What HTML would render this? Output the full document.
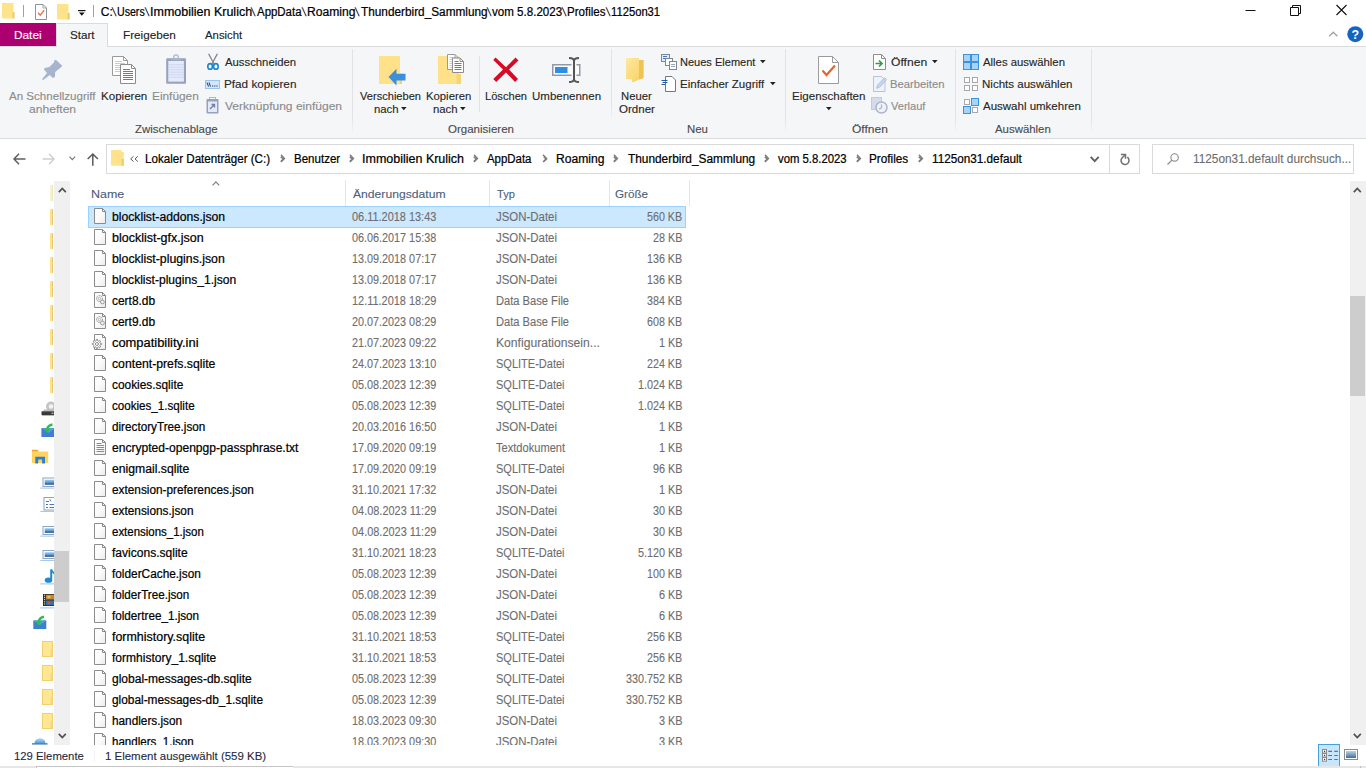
<!DOCTYPE html>
<html lang="de"><head><meta charset="utf-8"><title>1125on31.default</title>
<style>
html,body{margin:0;padding:0;}
body{width:1366px;height:768px;overflow:hidden;background:#fff;position:relative;font-family:'Liberation Sans',sans-serif;font-size:12px;}
.a{position:absolute;}
svg{position:absolute;overflow:visible;}
.t{transform-origin:0 0;position:absolute;white-space:pre;line-height:16px;height:16px;font-family:'Liberation Sans',sans-serif;}
#ribbon{left:0;top:46px;width:1366px;height:93px;background:#f5f6f7;border-top:1px solid #dadbdc;border-bottom:1px solid #dadbdc;box-sizing:border-box;}
#datei{left:0;top:23px;width:56px;height:23px;background:#ad0070;}
#start{left:56px;top:23px;width:52px;height:24px;background:#f5f6f7;border:1px solid #dadbdc;border-bottom:none;box-sizing:border-box;}
.gsep{width:1px;top:49px;height:86px;background:linear-gradient(#e2e3e4,#e2e3e4 80%,rgba(226,227,228,0));}
.ssep{width:1px;background:#e2e3e4;}
#addr{left:106px;top:144px;width:1034px;height:30px;border:1px solid #dadada;box-sizing:border-box;background:#fff;}
#addrsep{left:1109px;top:144px;width:1px;height:30px;background:#dadada;}
#search{left:1152px;top:144px;width:202px;height:30px;border:1px solid #dadada;box-sizing:border-box;background:#fff;}
#navsb{left:54px;top:181px;width:16px;height:564px;background:#f0f0f0;}
#navthumb{left:54px;top:551px;width:15px;height:51px;background:#cdcdcd;}
#mainsb{left:1350px;top:181px;width:16px;height:564px;background:#f0f0f0;}
#mainthumb{left:1350px;top:296px;width:15px;height:100px;background:#cdcdcd;}
.hsep{width:1px;top:180px;height:26px;background:#e5e5e5;}
#sel{left:88px;top:206px;width:598px;height:22px;background:#cce8ff;border:1px solid #99d1ff;box-sizing:border-box;}
#list{left:70px;top:180px;width:1279px;height:565px;overflow:hidden;}
#status{left:0;top:745px;width:1366px;height:21px;background:#fff;}
#bottom{left:0;top:766px;width:1366px;height:2px;background:#e6e6e6;}
#bottombox{left:36px;top:766px;width:257px;height:2px;background:#fff;border-top:1px solid #c4c4c4;border-left:1px solid #c4c4c4;box-sizing:border-box;}
#texts{position:absolute;left:0;top:0;width:1366px;height:745px;overflow:hidden;}
#texts2{position:absolute;left:0;top:0;width:1366px;height:768px;}

</style></head>
<body>
<!-- ============ title bar ============ -->
<svg style="left:2.250px;top:3.200px" width="13" height="16" viewBox="0 0 13 16"><path d="M0 0h11.500v15.500h-11.500z" fill="#ffe38a"/><path d="M11 9h1.500v6.500h-1.500z" fill="#eccb66"/><path d="M10 9.500h1v6h-1z" fill="#f6d878"/></svg>
<div class="a" style="left:23px;top:5px;width:1px;height:12px;background:#a0a0a0"></div>
<svg style="left:35px;top:4px" width="12" height="16" viewBox="0 0 12 16"><path d="M0.500 0.500h7.500l3.500 3.500v11.500h-11z" fill="#fff" stroke="#8d9398" stroke-width="1"/><path d="M8 0.500v3.500h3.500" fill="none" stroke="#8d9398" stroke-width="0.800"/><path d="M3 8.700l2.200 2.400l4-5" fill="none" stroke="#e8704a" stroke-width="1.400"/></svg>
<svg style="left:57px;top:4.200px" width="13" height="16" viewBox="0 0 13 16"><path d="M0 0h11.500v15.500h-11.500z" fill="#ffe38a"/><path d="M11 9h1.700v6.500h-1.700z" fill="#eccb66"/><path d="M10 9.500h1v6h-1z" fill="#f6d878"/></svg>
<svg style="left:78px;top:9px" width="8" height="8" viewBox="0 0 8 8"><path d="M0 1h7.5v1.2h-7.5z" fill="#111"/><path d="M1 3.5h5.6l-2.8 3.3z" fill="#111"/></svg>
<div class="a" style="left:93px;top:5px;width:1px;height:12px;background:#a0a0a0"></div>
<!-- window controls -->
<svg style="left:1244.600px;top:4px" width="104" height="13" viewBox="0 0 104 13">
 <path d="M0.5 6.5h10" stroke="#111" stroke-width="1" fill="none"/>
 <path d="M45.5 3.5h8v8h-8z M47.5 3.5v-2h8v8h-2" stroke="#111" stroke-width="1" fill="none"/>
 <path d="M91.5 1l10 10M101.5 1l-10 10" stroke="#111" stroke-width="1.1" fill="none"/>
</svg>
<!-- ============ tabs ============ -->
<div class="a" id="datei"></div>
<div class="a" id="ribbon"></div>
<div class="a" id="start"></div>
<svg style="left:1327.600px;top:31px" width="11" height="6" viewBox="0 0 11 6"><path d="M1.200 5.200l4.100-3.900l4.100 3.900" fill="none" stroke="#a6a6a6" stroke-width="1.500"/></svg>
<svg style="left:1346.700px;top:26px" width="17" height="17" viewBox="0 0 17 17"><circle cx="8.3" cy="8.2" r="8" fill="#1464c0"/><text x="8.3" y="12.6" text-anchor="middle" font-family="'Liberation Sans',sans-serif" font-weight="700" font-size="12.5" fill="#fff">?</text></svg>
<!-- ============ ribbon separators ============ -->
<div class="a gsep" style="left:352px"></div>
<div class="a gsep" style="left:785px"></div>
<div class="a gsep" style="left:955px"></div>
<div class="a gsep" style="left:1091px"></div>
<div class="a ssep" style="left:479px;top:56px;height:56px"></div>
<div class="a gsep" style="left:611px;height:72px"></div>
<!-- ============ ribbon icons ============ -->
<!-- pin -->
<svg style="left:41px;top:59px" width="22" height="22" viewBox="0 0 22 22"><path d="M13.300 1.200L15.100 1L21.200 6.700L20.300 8L14.200 13L13.900 17.900L11.800 19.100L8.900 15.900L2.200 20.900L1 20.300L6 14.100L3 10.600L3.600 8.900L8.300 8L13 3.600z" fill="#a6b4ce"/></svg>
<!-- copy -->
<svg style="left:112px;top:56px" width="24" height="28" viewBox="0 0 24 28">
 <path d="M0.5 0.5h11l4 4v15h-15z" fill="#fff" stroke="#9a9a9a"/><path d="M11.5 0.5v4h4" fill="none" stroke="#9a9a9a"/>
 <path d="M3 5.5h7M3 7.5h10M3 9.5h10M3 11.5h10M3 13.5h10M3 15.5h10" stroke="#b9cdf0" stroke-width="1"/>
 <path d="M8.5 8.5h11l4 4v15h-15z" fill="#fff" stroke="#8c8c8c"/><path d="M19.5 8.5v4h4" fill="none" stroke="#8c8c8c"/>
 <path d="M11 13.5h7M11 15.5h10M11 17.5h10M11 19.5h10M11 21.5h10M11 23.5h10" stroke="#4a80d8" stroke-width="1"/>
</svg>
<!-- paste (disabled) -->
<svg style="left:166px;top:54px" width="20" height="30" viewBox="0 0 20 30">
 <path d="M7.700 4.500v-1.300a2.300 2.300 0 0 1 4.600 0v1.300" fill="none" stroke="#aeb7cc" stroke-width="1.300"/>
 <rect x="0.200" y="4.200" width="19.800" height="25.600" rx="1" fill="#98a2bc"/>
 <rect x="5" y="4" width="10" height="2.300" fill="#a9b2c8"/>
 <rect x="2.300" y="7" width="15.600" height="20.600" fill="#e5ebfa"/>
 <path d="M2.300 10.700h15.600M2.300 13.200h15.600M2.300 15.700h15.600M2.300 18.200h15.600M2.300 20.700h15.600M2.300 23.200h15.600" stroke="#cad4ef" stroke-width="0.900"/>
</svg>
<!-- scissors -->
<svg style="left:207px;top:53px" width="12" height="17" viewBox="0 0 12 17">
 <path d="M1.600 0.800l5.600 10.500M10.400 0.800l-5.600 10.500" stroke="#858585" stroke-width="1.300" fill="none"/>
 <ellipse cx="3.100" cy="13.400" rx="2.300" ry="2.800" fill="none" stroke="#1b86d0" stroke-width="1.600"/>
 <ellipse cx="8.900" cy="13.400" rx="2.300" ry="2.800" fill="none" stroke="#1b86d0" stroke-width="1.600"/>
</svg>
<!-- path copy -->
<svg style="left:205px;top:80px" width="15" height="9" viewBox="0 0 15 9"><rect x="0.5" y="0.5" width="14" height="8" fill="#d3e6fb" stroke="#9cc3ee"/><path d="M2 2.5l1.5 4M4 2.5l1.5 4" stroke="#1f3a5f" stroke-width="1"/><path d="M7 6h1.2M9.2 6h1.2M11.4 6h1.2" stroke="#1f3a5f" stroke-width="1.2"/></svg>
<!-- paste shortcut (disabled) -->
<svg style="left:206px;top:97px" width="13" height="17" viewBox="0 0 13 17">
 <rect x="3.5" y="0.5" width="6" height="3" fill="none" stroke="#b0b9cc"/>
 <rect x="0.5" y="2" width="12" height="14.5" rx="0.8" fill="#93a2bf"/>
 <rect x="2" y="4.5" width="9" height="10.5" fill="#e3e9f6"/>
 <path d="M4 12l4-4M5.5 7.5h3v3" stroke="#6d7fa5" stroke-width="1.3" fill="none"/>
</svg>
<!-- move to -->
<svg style="left:379px;top:56px" width="28" height="30" viewBox="0 0 28 30">
 <path d="M0 0h21v28h-21z" fill="#ffe18a"/><path d="M21 17.500h2v10.500h-2z" fill="#f2d06c"/>
 <path d="M9.500 21l8-8.300v5h9v6.800h-9v5z" fill="#3b8fdc"/>
</svg>
<!-- copy to -->
<svg style="left:438px;top:54px" width="27" height="31" viewBox="0 0 27 31">
 <path d="M0 2h21v28h-21z" fill="#ffe18a"/><path d="M18.500 20h4.500v10h-4.500z" fill="#f5d576"/>
 <path d="M9.500 0.500h7.500l3.500 3.500v11.500h-11z" fill="#fff" stroke="#9a9a9a"/><path d="M17 0.500v3.500h3.500" fill="none" stroke="#9a9a9a"/>
 <path d="M11.500 3.500h4M11.500 5.500h3M11.500 7.500h3M11.500 9.500h3M11.500 11.500h3M11.500 13.500h3" stroke="#b9cdf0" stroke-width="1"/>
 <path d="M14.500 4h7.500l3.500 3.500v11h-11z" fill="#fff" stroke="#8c8c8c"/><path d="M22 4v3.500h3.500" fill="none" stroke="#8c8c8c"/>
 <path d="M16.500 7.500h4M16.500 9.500h7M16.500 11.500h7M16.500 13.500h7M16.500 15.500h7" stroke="#4a80d8" stroke-width="1"/>
</svg>
<!-- delete -->
<svg style="left:493px;top:57px" width="26" height="26" viewBox="0 0 26 26"><path d="M2.5 0.500L13 10.200L22.500 0.500L25.500 3.500L16 12.600L25 22L22 25L13 15.500L3.200 25L0.300 22L10 12.600L0.300 3z" fill="#d80a25"/></svg>
<!-- rename -->
<svg style="left:552px;top:57px" width="29" height="26" viewBox="0 0 29 26">
 <rect x="0.750" y="7.750" width="27" height="10.500" fill="#fff" stroke="#8e9aa8" stroke-width="1.500"/>
 <rect x="3" y="10" width="12.500" height="6" fill="#2f8ee0"/>
 <rect x="19.500" y="6" width="5" height="14" fill="#f5f6f7"/>
 <path d="M17 1c3 0 5 0.800 5 3v18c0 2.200-2 3-5 3M27 1c-3 0-5 0.800-5 3M27 25c-3 0-5-0.800-5-3" fill="none" stroke="#565656" stroke-width="2"/>
</svg>
<!-- new folder -->
<svg style="left:625px;top:57px" width="20" height="26" viewBox="0 0 20 26">
 <defs><linearGradient id="nf" x1="0" y1="0" x2="1" y2="1"><stop offset="0" stop-color="#ffe9a2"/><stop offset="1" stop-color="#f6cf5e"/></linearGradient></defs>
 <path d="M1 1h13v2h4.500v18l-4.500 1.500l-5 2.500h-2l-0.500-3h-5.500z" fill="url(#nf)"/>
 <path d="M14 3h4.500v18l-4.500 1.500z" fill="#efc453"/>
</svg>
<!-- neues element -->
<svg style="left:661px;top:54px" width="16" height="16" viewBox="0 0 16 16">
 <rect x="0.500" y="0.500" width="8" height="7" fill="#e4eefb" stroke="#7b8794"/><path d="M2 2.500h4M2 4.500h2" stroke="#3b78c9" stroke-width="1"/>
 <rect x="4.500" y="4.500" width="7" height="7" fill="#fff" stroke="#7b8794"/>
 <rect x="8.500" y="7.500" width="7" height="8" fill="#fff" stroke="#7b8794"/><path d="M10 10.500h4M10 12.500h4" stroke="#9aa5b3" stroke-width="1"/>
</svg>
<!-- einfacher zugriff -->
<svg style="left:661px;top:76px" width="15" height="16" viewBox="0 0 15 16">
 <path d="M4.500 0.500h6.500l3.500 3.500v11.500h-10z" fill="#fff" stroke="#6f7a86"/>
 <path d="M0.500 4.500h6M1.500 6.500h5M0.500 8.500h4" stroke="#2a5d9f" stroke-width="1"/>
</svg>
<!-- eigenschaften -->
<svg style="left:818px;top:56px" width="21" height="28" viewBox="0 0 21 28">
 <path d="M0.500 0.500h14l6 6v21h-20z" fill="#fff" stroke="#9b9b9b"/><path d="M14.500 0.500v6h6" fill="none" stroke="#9b9b9b"/>
 <path d="M4.500 14.500l4 4.500l8.500-9.500" fill="none" stroke="#e8642c" stroke-width="2.200"/>
</svg>
<svg style="left:825.500px;top:107px" width="6" height="4" viewBox="0 0 6 4"><path d="M0 0h5.600l-2.800 3.200z" fill="#222"/></svg>
<!-- öffnen -->
<svg style="left:873px;top:54px" width="13" height="16" viewBox="0 0 13 16">
 <path d="M0.500 0.500h8l4 4v11h-12z" fill="#fff" stroke="#8f8f8f"/><path d="M8.500 0.500v4h4" fill="none" stroke="#8f8f8f"/>
 <path d="M2.500 9.500h6M6 6.500l3 3l-3 3" fill="none" stroke="#2ea043" stroke-width="1.700"/>
</svg>
<!-- bearbeiten (disabled) -->
<svg style="left:873px;top:76px" width="14" height="16" viewBox="0 0 14 16">
 <path d="M0.500 0.500h8l3.500 3.500v11.500h-11.500z" fill="#eef2fa" stroke="#b9c2d6"/>
 <path d="M3.500 12.300l1-3l7-7.500l2 2l-7 7.500z" fill="#c9d3ea" stroke="#aab6d4" stroke-width="0.800"/>
</svg>
<!-- verlauf (disabled) -->
<svg style="left:871px;top:97px" width="17" height="17" viewBox="0 0 17 17">
 <rect x="0.500" y="0.500" width="10" height="12" fill="#d5dbe8" stroke="#c2cadb"/>
 <circle cx="10.500" cy="10.500" r="5.500" fill="#eef1f7" stroke="#a9b3c9" stroke-width="1.400"/>
 <path d="M10.500 7.500v3.200l-2.300 1.500" fill="none" stroke="#a9b3c9" stroke-width="1.200"/>
</svg>
<!-- alles auswählen -->
<svg style="left:963px;top:54px" width="17" height="17" viewBox="0 0 17 17">
 <rect x="0.500" y="0.500" width="7" height="7" fill="#a9d3f6" stroke="#3a93df"/><rect x="8.500" y="0.500" width="7" height="7" fill="#a9d3f6" stroke="#3a93df"/>
 <rect x="0.500" y="8.500" width="7" height="7" fill="#a9d3f6" stroke="#3a93df"/><rect x="8.500" y="8.500" width="7" height="7" fill="#a9d3f6" stroke="#3a93df"/>
</svg>
<!-- nichts auswählen -->
<svg style="left:963px;top:76px" width="17" height="17" viewBox="0 0 17 17">
 <rect x="1.500" y="1.500" width="5" height="5" fill="#fff" stroke="#a8a8a8"/><rect x="9.500" y="1.500" width="5" height="5" fill="#fff" stroke="#a8a8a8"/>
 <rect x="1.500" y="9.500" width="5" height="5" fill="#fff" stroke="#a8a8a8"/><rect x="9.500" y="9.500" width="5" height="5" fill="#fff" stroke="#a8a8a8"/>
</svg>
<!-- auswahl umkehren -->
<svg style="left:963px;top:98px" width="17" height="17" viewBox="0 0 17 17">
 <rect x="1.500" y="1.500" width="5" height="5" fill="#fff" stroke="#a8a8a8"/>
 <rect x="8.500" y="0.500" width="7" height="7" fill="#a9d3f6" stroke="#3a93df"/>
 <rect x="0.500" y="8.500" width="7" height="7" fill="#a9d3f6" stroke="#3a93df"/>
 <rect x="9.500" y="9.500" width="5" height="5" fill="#fff" stroke="#a8a8a8"/>
</svg>
<!-- dropdown arrows in ribbon -->
<svg style="left:401.200px;top:107px" width="6" height="4" viewBox="0 0 6 4"><path d="M0 0h5.600l-2.800 3.200z" fill="#222"/></svg>
<svg style="left:460.200px;top:107px" width="6" height="4" viewBox="0 0 6 4"><path d="M0 0h5.600l-2.800 3.200z" fill="#222"/></svg>
<svg style="left:759.500px;top:60px" width="6" height="4" viewBox="0 0 6 4"><path d="M0 0h5.600l-2.800 3.200z" fill="#222"/></svg>
<svg style="left:769.500px;top:82px" width="6" height="4" viewBox="0 0 6 4"><path d="M0 0h5.600l-2.800 3.200z" fill="#222"/></svg>
<svg style="left:932px;top:60px" width="6" height="4" viewBox="0 0 6 4"><path d="M0 0h5.600l-2.800 3.200z" fill="#222"/></svg>
<!-- ============ nav row ============ -->
<svg style="left:13px;top:153px" width="13" height="12" viewBox="0 0 13 12"><path d="M6 0.700l-5 5.300l5 5.300M1 6h11.500" fill="none" stroke="#5f5f5f" stroke-width="1.500"/></svg>
<svg style="left:42px;top:153px" width="13" height="12" viewBox="0 0 13 12"><path d="M7 0.700l5 5.300l-5 5.300M12 6h-11.500" fill="none" stroke="#cfcfcf" stroke-width="1.500"/></svg>
<svg style="left:69px;top:156px" width="7" height="5" viewBox="0 0 7 5"><path d="M0.500 0.700l2.800 2.900l2.800-2.900" fill="none" stroke="#7a7a7a" stroke-width="1.200"/></svg>
<svg style="left:87px;top:153px" width="12" height="13" viewBox="0 0 12 13"><path d="M0.700 6l5.100-5l5.100 5M5.800 1v11.700" fill="none" stroke="#5a5a5a" stroke-width="1.500"/></svg>
<div class="a" id="addr"></div>
<div class="a" id="addrsep"></div>
<div class="a" id="search"></div>
<svg style="left:111px;top:150px" width="13" height="16" viewBox="0 0 13 16"><path d="M0 0h10.500v2h2.300v13.700h-12.800z" fill="#ffe38c"/><path d="M10.500 9h2.300v6.700h-2.300z" fill="#efcf6a"/></svg>
<svg style="left:130px;top:156px" width="9" height="6" viewBox="0 0 9 6"><path d="M3.500 0.300l-2.800 2.600l2.800 2.600M7.800 0.300l-2.800 2.600l2.800 2.600" fill="none" stroke="#555" stroke-width="1"/></svg>
<!-- breadcrumb chevrons -->
<svg style="left:280.1px;top:156.400px" width="5" height="7" viewBox="0 0 5 7"><path d="M0.800 0.700l2.600 2.400l-2.600 2.400" fill="none" stroke="#7e7e7e" stroke-width="1.600"/></svg>
<svg style="left:348.8px;top:156.400px" width="5" height="7" viewBox="0 0 5 7"><path d="M0.800 0.700l2.600 2.400l-2.600 2.400" fill="none" stroke="#7e7e7e" stroke-width="1.600"/></svg>
<svg style="left:473.3px;top:156.400px" width="5" height="7" viewBox="0 0 5 7"><path d="M0.800 0.700l2.600 2.400l-2.600 2.400" fill="none" stroke="#7e7e7e" stroke-width="1.600"/></svg>
<svg style="left:542.5px;top:156.400px" width="5" height="7" viewBox="0 0 5 7"><path d="M0.800 0.700l2.600 2.400l-2.600 2.400" fill="none" stroke="#7e7e7e" stroke-width="1.600"/></svg>
<svg style="left:613.0px;top:156.400px" width="5" height="7" viewBox="0 0 5 7"><path d="M0.800 0.700l2.600 2.400l-2.600 2.400" fill="none" stroke="#7e7e7e" stroke-width="1.600"/></svg>
<svg style="left:763.8px;top:156.400px" width="5" height="7" viewBox="0 0 5 7"><path d="M0.800 0.700l2.600 2.400l-2.600 2.400" fill="none" stroke="#7e7e7e" stroke-width="1.600"/></svg>
<svg style="left:856.3px;top:156.400px" width="5" height="7" viewBox="0 0 5 7"><path d="M0.800 0.700l2.600 2.400l-2.600 2.400" fill="none" stroke="#7e7e7e" stroke-width="1.600"/></svg>
<svg style="left:918.0px;top:156.400px" width="5" height="7" viewBox="0 0 5 7"><path d="M0.800 0.700l2.600 2.400l-2.600 2.400" fill="none" stroke="#7e7e7e" stroke-width="1.600"/></svg>
<svg style="left:279.500px;top:154px" width="6" height="9" viewBox="0 0 6 9"><path d="M1 0.800l3.500 3.600l-3.500 3.600" fill="none" stroke="#7a7a7a" stroke-width="1.300"/></svg>
<svg style="left:348.500px;top:154px" width="6" height="9" viewBox="0 0 6 9"><path d="M1 0.800l3.500 3.600l-3.500 3.600" fill="none" stroke="#7a7a7a" stroke-width="1.300"/></svg>
<svg style="left:473px;top:154px" width="6" height="9" viewBox="0 0 6 9"><path d="M1 0.800l3.500 3.600l-3.500 3.600" fill="none" stroke="#7a7a7a" stroke-width="1.300"/></svg>
<svg style="left:542px;top:154px" width="6" height="9" viewBox="0 0 6 9"><path d="M1 0.800l3.500 3.600l-3.500 3.600" fill="none" stroke="#7a7a7a" stroke-width="1.300"/></svg>
<svg style="left:613px;top:154px" width="6" height="9" viewBox="0 0 6 9"><path d="M1 0.800l3.500 3.600l-3.500 3.600" fill="none" stroke="#7a7a7a" stroke-width="1.300"/></svg>
<svg style="left:763.500px;top:154px" width="6" height="9" viewBox="0 0 6 9"><path d="M1 0.800l3.500 3.600l-3.500 3.600" fill="none" stroke="#7a7a7a" stroke-width="1.300"/></svg>
<svg style="left:856px;top:154px" width="6" height="9" viewBox="0 0 6 9"><path d="M1 0.800l3.500 3.600l-3.500 3.600" fill="none" stroke="#7a7a7a" stroke-width="1.300"/></svg>
<svg style="left:918px;top:154px" width="6" height="9" viewBox="0 0 6 9"><path d="M1 0.800l3.500 3.600l-3.500 3.600" fill="none" stroke="#7a7a7a" stroke-width="1.300"/></svg>
<!-- address dropdown / refresh / search -->
<svg style="left:1090px;top:156px" width="10" height="7" viewBox="0 0 10 7"><path d="M0.700 0.800l4 4.300l4-4.300" fill="none" stroke="#606060" stroke-width="1.900"/></svg>
<svg style="left:1119px;top:153px" width="12" height="13" viewBox="0 0 12 13"><path d="M8.300 4.200A4 4 0 1 1 2.940 4.930L6.300 1.800" fill="none" stroke="#707070" stroke-width="1.500"/><path d="M2 1.500H6.500V5.700" fill="none" stroke="#707070" stroke-width="1.500"/></svg>
<svg style="left:1167px;top:153px" width="12" height="12" viewBox="0 0 12 12"><circle cx="7.600" cy="4.400" r="3.700" fill="none" stroke="#8a8a8a" stroke-width="1.100"/><path d="M4.900 7.100l-4.400 4.400" stroke="#8a8a8a" stroke-width="1.200"/></svg>

<!-- ============ nav pane ============ -->
<div class="a" id="navpane" style="left:0;top:180px;width:54px;height:565px;overflow:hidden">
<div class="a" style="left:50px;top:5px;width:3px;height:16px;background:#f8f1cf;border-right:1px solid #efe6bd;box-sizing:border-box"></div>
<div class="a" style="left:50px;top:29px;width:3px;height:16px;background:#ffe285;border-right:1px solid #e6ca70;box-sizing:border-box"></div>
<div class="a" style="left:50px;top:53px;width:3px;height:16px;background:#ffe285;border-right:1px solid #e6ca70;box-sizing:border-box"></div>
<div class="a" style="left:50px;top:77px;width:3px;height:16px;background:#ffe285;border-right:1px solid #e6ca70;box-sizing:border-box"></div>
<div class="a" style="left:50px;top:101px;width:3px;height:16px;background:#ffe285;border-right:1px solid #e6ca70;box-sizing:border-box"></div>
<div class="a" style="left:50px;top:125px;width:3px;height:16px;background:#ffe285;border-right:1px solid #e6ca70;box-sizing:border-box"></div>
<div class="a" style="left:50px;top:149px;width:3px;height:16px;background:#ffe285;border-right:1px solid #e6ca70;box-sizing:border-box"></div>
<div class="a" style="left:50px;top:173px;width:3px;height:16px;background:#ffe285;border-right:1px solid #e6ca70;box-sizing:border-box"></div>
<div class="a" style="left:50px;top:197px;width:3px;height:16px;background:#ffe285;border-right:1px solid #e6ca70;box-sizing:border-box"></div><!-- drive -->
<svg style="left:41px;top:221px" width="14" height="15" viewBox="0 0 14 15"><circle cx="10" cy="5.500" r="5" fill="#c4c4c4"/><circle cx="10" cy="5.500" r="2.300" fill="#f2f2f2"/><path d="M3 8.500h11v2h-12z" fill="#bdbdbd"/><rect x="0.500" y="10.300" width="14" height="3.700" fill="#3a3a3a"/><rect x="10.500" y="11.700" width="2" height="1" fill="#e6e6e6"/><rect x="1" y="14.300" width="13" height="0.700" fill="#9a9a9a"/></svg>
<!-- blue w/ check -->
<svg style="left:41px;top:244px" width="14" height="13" viewBox="0 0 14 13"><rect x="0.400" y="4" width="14" height="9" fill="#3f7fcf"/><path d="M0.400 4h14l-7 5z" fill="#5d99de"/><path d="M11.500 0.500c-3 0.500-5 2.300-5.600 5" fill="none" stroke="#27c24c" stroke-width="2.400"/><path d="M3 4.700h6l-3 4.300z" fill="#27c24c"/></svg>
<!-- explorer folder -->
<svg style="left:32px;top:269px" width="17" height="15" viewBox="0 0 17 15"><path d="M0 0.800h5.500l1.700 2h-7.200z" fill="#efa62b"/><rect x="0" y="2.600" width="16.200" height="11.400" fill="#ffd35c"/><path d="M3.300 14.500v-6.700h9.700v6.700h-2.900v-3.900h-3.900v3.900z" fill="#2a7fd0"/></svg>
<!-- pictures-like 1 -->
<svg style="left:40px;top:297px" width="15" height="12" viewBox="0 0 15 12"><defs><linearGradient id="pg" x1="0" y1="0" x2="0" y2="1"><stop offset="0" stop-color="#9fd0f5"/><stop offset="0.550" stop-color="#5b9bd8"/><stop offset="1" stop-color="#1d3f6b"/></linearGradient></defs><rect x="3" y="1" width="12" height="8.500" fill="#fff" stroke="#8ea3bd"/><rect x="4.700" y="2.700" width="10" height="5" fill="url(#pg)"/><rect x="0.300" y="10.600" width="15" height="1" fill="#9cc4e8"/></svg>
<!-- documents -->
<svg style="left:40px;top:317px" width="15" height="15" viewBox="0 0 15 15"><rect x="4" y="0.500" width="11" height="12.500" fill="#fff" stroke="#8ea3bd"/><path d="M6 4.500h3M6 7.500h2M9.500 7.500h5M6 10.500h2M9.500 10.500h5" stroke="#3a78c8" stroke-width="1"/><path d="M9.500 2l1.500 2.500" stroke="#3a78c8" stroke-width="0.900"/><rect x="0.300" y="13.900" width="15" height="1" fill="#9cc4e8"/></svg>
<!-- pictures x2 -->
<svg style="left:40px;top:346px" width="15" height="11" viewBox="0 0 15 11"><rect x="3" y="0.500" width="12" height="8" fill="#fff" stroke="#8ea3bd"/><rect x="4.700" y="2.200" width="10" height="4.600" fill="url(#pg)"/><rect x="0.300" y="9.600" width="15" height="1" fill="#9cc4e8"/></svg>
<svg style="left:40px;top:370px" width="15" height="11" viewBox="0 0 15 11"><rect x="3" y="0.500" width="12" height="8" fill="#fff" stroke="#8ea3bd"/><rect x="4.700" y="2.200" width="10" height="4.600" fill="url(#pg)"/><rect x="0.300" y="9.900" width="15" height="1" fill="#9cc4e8"/></svg>
<!-- music -->
<svg style="left:40px;top:389px" width="15" height="16" viewBox="0 0 15 16"><path d="M11.200 0.500v10" stroke="#1e8ad6" stroke-width="2"/><path d="M11.200 0.500c0.800 2.400 2.300 3.400 3.800 4.600" stroke="#1e8ad6" stroke-width="1.800" fill="none"/><ellipse cx="8.500" cy="11.200" rx="3.700" ry="2.600" fill="#1e8ad6"/><rect x="0.300" y="14.400" width="15" height="1" fill="#9cc4e8"/></svg>
<!-- video -->
<svg style="left:40px;top:414px" width="15" height="15" viewBox="0 0 15 15"><rect x="3" y="0" width="12" height="12" fill="#2e2e2e"/><rect x="6" y="0.800" width="9" height="4.700" fill="#c9852f"/><rect x="6" y="6.500" width="9" height="4.700" fill="#3c6fa8"/><rect x="7.500" y="1.800" width="3" height="2.500" fill="#e3c34a"/><rect x="7.500" y="7.500" width="3" height="2.500" fill="#d0523a"/><path d="M4 1.200h1.200M4 3.400h1.200M4 5.600h1.200M4 7.800h1.200M4 10h1.200" stroke="#eaeaea" stroke-width="1"/><rect x="0.300" y="13.400" width="15" height="1" fill="#9cc4e8"/></svg>
<!-- downloads-ish -->
<svg style="left:33px;top:436px" width="14" height="14" viewBox="0 0 14 14"><rect x="0.300" y="4.500" width="13" height="8.500" fill="#3f7fcf"/><path d="M0.300 4.500h13l-6.500 4.500z" fill="#5d99de"/><path d="M11 0.800c-3 0.500-5 2.500-5.600 5.400" fill="none" stroke="#27c24c" stroke-width="2.400"/><path d="M2.500 5.200h6l-3 4.300z" fill="#27c24c"/></svg>
<!-- folders -->
<svg style="left:42px;top:461px" width="11" height="16" viewBox="0 0 11 16"><rect x="0.500" y="0.500" width="10" height="15" fill="#ffe693" stroke="#f0cf6f"/><rect x="8.500" y="8" width="2" height="7.500" fill="#f5d77c"/></svg>
<svg style="left:42px;top:485px" width="11" height="16" viewBox="0 0 11 16"><rect x="0.500" y="0.500" width="10" height="15" fill="#ffe693" stroke="#f0cf6f"/><rect x="8.500" y="8" width="2" height="7.500" fill="#f5d77c"/></svg>
<svg style="left:42px;top:509px" width="11" height="16" viewBox="0 0 11 16"><rect x="0.500" y="0.500" width="10" height="15" fill="#ffe693" stroke="#f0cf6f"/><rect x="8.500" y="8" width="2" height="7.500" fill="#f5d77c"/></svg>
<svg style="left:42px;top:533px" width="11" height="16" viewBox="0 0 11 16"><rect x="0.500" y="0.500" width="10" height="15" fill="#ffe693" stroke="#f0cf6f"/><rect x="8.500" y="8" width="2" height="7.500" fill="#f5d77c"/></svg>
<!-- network -->
<svg style="left:32px;top:557px" width="16" height="9" viewBox="0 0 16 9"><defs><linearGradient id="ng" x1="0" y1="0" x2="0" y2="1"><stop offset="0" stop-color="#c4e3f8"/><stop offset="1" stop-color="#4b94d6"/></linearGradient></defs><path d="M2.500 6.500a5.500 5.500 0 0 1 11 0z" fill="url(#ng)"/><rect x="0" y="6.300" width="15.500" height="1.200" fill="#2a68a8"/></svg>

</div>
<div class="a" id="navsb"></div>
<div class="a" id="navthumb"></div>
<svg style="left:57.500px;top:187px" width="9" height="6" viewBox="0 0 9 6"><path d="M0.800 5.200l3.500-3.700l3.500 3.700" fill="none" stroke="#505050" stroke-width="1.700"/></svg>
<svg style="left:57.500px;top:733px" width="9" height="6" viewBox="0 0 9 6"><path d="M0.800 0.800l3.500 3.700l3.500-3.700" fill="none" stroke="#505050" stroke-width="1.700"/></svg>
<!-- ============ list header ============ -->
<div class="a hsep" style="left:345px"></div>
<div class="a hsep" style="left:489px"></div>
<div class="a hsep" style="left:609px"></div>
<div class="a hsep" style="left:689px"></div>
<svg style="left:212px;top:181px" width="8" height="5" viewBox="0 0 8 5"><path d="M0.600 4.400l3.300-3.500l3.300 3.500" fill="none" stroke="#828282" stroke-width="1.300"/></svg>
<div class="a" id="sel"></div>
<svg width="0" height="0" style="left:0;top:0"><defs><linearGradient id="dg" x1="0" y1="0" x2="1" y2="1"><stop offset="0" stop-color="#ffffff"/><stop offset="0.500" stop-color="#fbfbfb"/><stop offset="1" stop-color="#ebebeb"/></linearGradient></defs></svg>
<svg style="left:94px;top:208px" width="13" height="16" viewBox="0 0 13 16"><path d="M0.500 0.500h8l3 3v12h-11z" fill="url(#dg)" stroke="#8c8c8c"/><path d="M8.500 0.500v3h3" fill="none" stroke="#878787"/></svg>
<svg style="left:94px;top:229px" width="13" height="16" viewBox="0 0 13 16"><path d="M0.500 0.500h8l3 3v12h-11z" fill="url(#dg)" stroke="#8c8c8c"/><path d="M8.500 0.500v3h3" fill="none" stroke="#878787"/></svg>
<svg style="left:94px;top:250px" width="13" height="16" viewBox="0 0 13 16"><path d="M0.500 0.500h8l3 3v12h-11z" fill="url(#dg)" stroke="#8c8c8c"/><path d="M8.500 0.500v3h3" fill="none" stroke="#878787"/></svg>
<svg style="left:94px;top:271px" width="13" height="16" viewBox="0 0 13 16"><path d="M0.500 0.500h8l3 3v12h-11z" fill="url(#dg)" stroke="#8c8c8c"/><path d="M8.500 0.500v3h3" fill="none" stroke="#878787"/></svg>
<svg style="left:94px;top:292px" width="13" height="16" viewBox="0 0 13 16"><path d="M0.500 0.500h8l3 3v12h-11z" fill="url(#dg)" stroke="#8c8c8c"/><path d="M8.500 0.500v3h3" fill="none" stroke="#878787"/><circle cx="5.500" cy="6.500" r="3" fill="#f4f4f4" stroke="#909090" stroke-width="1" stroke-dasharray="1.500 0.700"/><circle cx="5.500" cy="6.500" r="1.200" fill="#fff" stroke="#9a9a9a" stroke-width="0.700"/><circle cx="8.400" cy="10" r="1.900" fill="#f4f4f4" stroke="#909090" stroke-width="0.900"/></svg>
<svg style="left:94px;top:313px" width="13" height="16" viewBox="0 0 13 16"><path d="M0.500 0.500h8l3 3v12h-11z" fill="url(#dg)" stroke="#8c8c8c"/><path d="M8.500 0.500v3h3" fill="none" stroke="#878787"/><circle cx="5.500" cy="6.500" r="3" fill="#f4f4f4" stroke="#909090" stroke-width="1" stroke-dasharray="1.500 0.700"/><circle cx="5.500" cy="6.500" r="1.200" fill="#fff" stroke="#9a9a9a" stroke-width="0.700"/><circle cx="8.400" cy="10" r="1.900" fill="#f4f4f4" stroke="#909090" stroke-width="0.900"/></svg>
<svg style="left:94px;top:334px" width="13" height="16" viewBox="0 0 13 16"><path d="M0.500 0.500h8l3 3v12h-11z" fill="url(#dg)" stroke="#8c8c8c"/><path d="M8.500 0.500v3h3" fill="none" stroke="#878787"/><path d="M6.12 9.28L7.56 9.41L7.56 10.59L6.12 10.72L5.69 11.77L6.61 12.88L5.78 13.71L4.67 12.79L3.62 13.22L3.49 14.66L2.31 14.66L2.18 13.22L1.13 12.79L0.02 13.71L-0.81 12.88L0.11 11.77L-0.32 10.72L-1.76 10.59L-1.76 9.41L-0.32 9.28L0.11 8.23L-0.81 7.12L0.02 6.29L1.13 7.21L2.18 6.78L2.31 5.34L3.49 5.34L3.62 6.78L4.67 7.21L5.78 6.29L6.61 7.12L5.69 8.23z" fill="#fff" stroke="#858585" stroke-width="0.900"/><circle cx="2.900" cy="10" r="1.500" fill="#fff" stroke="#858585" stroke-width="0.900"/></svg>
<svg style="left:94px;top:355px" width="13" height="16" viewBox="0 0 13 16"><path d="M0.500 0.500h8l3 3v12h-11z" fill="url(#dg)" stroke="#8c8c8c"/><path d="M8.500 0.500v3h3" fill="none" stroke="#878787"/></svg>
<svg style="left:94px;top:376px" width="13" height="16" viewBox="0 0 13 16"><path d="M0.500 0.500h8l3 3v12h-11z" fill="url(#dg)" stroke="#8c8c8c"/><path d="M8.500 0.500v3h3" fill="none" stroke="#878787"/></svg>
<svg style="left:94px;top:397px" width="13" height="16" viewBox="0 0 13 16"><path d="M0.500 0.500h8l3 3v12h-11z" fill="url(#dg)" stroke="#8c8c8c"/><path d="M8.500 0.500v3h3" fill="none" stroke="#878787"/></svg>
<svg style="left:94px;top:418px" width="13" height="16" viewBox="0 0 13 16"><path d="M0.500 0.500h8l3 3v12h-11z" fill="url(#dg)" stroke="#8c8c8c"/><path d="M8.500 0.500v3h3" fill="none" stroke="#878787"/></svg>
<svg style="left:94px;top:439px" width="13" height="16" viewBox="0 0 13 16"><path d="M0.500 0.500h8l3 3v12h-11z" fill="url(#dg)" stroke="#8c8c8c"/><path d="M8.500 0.500v3h3" fill="none" stroke="#878787"/><path d="M2.500 4.500h5M2.500 6.500h7.500M2.500 8.500h7.500M2.500 10.500h7.500M2.500 12.500h7.500" stroke="#8a8a8a" stroke-width="1"/></svg>
<svg style="left:94px;top:460px" width="13" height="16" viewBox="0 0 13 16"><path d="M0.500 0.500h8l3 3v12h-11z" fill="url(#dg)" stroke="#8c8c8c"/><path d="M8.500 0.500v3h3" fill="none" stroke="#878787"/></svg>
<svg style="left:94px;top:481px" width="13" height="16" viewBox="0 0 13 16"><path d="M0.500 0.500h8l3 3v12h-11z" fill="url(#dg)" stroke="#8c8c8c"/><path d="M8.500 0.500v3h3" fill="none" stroke="#878787"/></svg>
<svg style="left:94px;top:502px" width="13" height="16" viewBox="0 0 13 16"><path d="M0.500 0.500h8l3 3v12h-11z" fill="url(#dg)" stroke="#8c8c8c"/><path d="M8.500 0.500v3h3" fill="none" stroke="#878787"/></svg>
<svg style="left:94px;top:523px" width="13" height="16" viewBox="0 0 13 16"><path d="M0.500 0.500h8l3 3v12h-11z" fill="url(#dg)" stroke="#8c8c8c"/><path d="M8.500 0.500v3h3" fill="none" stroke="#878787"/></svg>
<svg style="left:94px;top:544px" width="13" height="16" viewBox="0 0 13 16"><path d="M0.500 0.500h8l3 3v12h-11z" fill="url(#dg)" stroke="#8c8c8c"/><path d="M8.500 0.500v3h3" fill="none" stroke="#878787"/></svg>
<svg style="left:94px;top:565px" width="13" height="16" viewBox="0 0 13 16"><path d="M0.500 0.500h8l3 3v12h-11z" fill="url(#dg)" stroke="#8c8c8c"/><path d="M8.500 0.500v3h3" fill="none" stroke="#878787"/></svg>
<svg style="left:94px;top:586px" width="13" height="16" viewBox="0 0 13 16"><path d="M0.500 0.500h8l3 3v12h-11z" fill="url(#dg)" stroke="#8c8c8c"/><path d="M8.500 0.500v3h3" fill="none" stroke="#878787"/></svg>
<svg style="left:94px;top:607px" width="13" height="16" viewBox="0 0 13 16"><path d="M0.500 0.500h8l3 3v12h-11z" fill="url(#dg)" stroke="#8c8c8c"/><path d="M8.500 0.500v3h3" fill="none" stroke="#878787"/></svg>
<svg style="left:94px;top:628px" width="13" height="16" viewBox="0 0 13 16"><path d="M0.500 0.500h8l3 3v12h-11z" fill="url(#dg)" stroke="#8c8c8c"/><path d="M8.500 0.500v3h3" fill="none" stroke="#878787"/></svg>
<svg style="left:94px;top:649px" width="13" height="16" viewBox="0 0 13 16"><path d="M0.500 0.500h8l3 3v12h-11z" fill="url(#dg)" stroke="#8c8c8c"/><path d="M8.500 0.500v3h3" fill="none" stroke="#878787"/></svg>
<svg style="left:94px;top:670px" width="13" height="16" viewBox="0 0 13 16"><path d="M0.500 0.500h8l3 3v12h-11z" fill="url(#dg)" stroke="#8c8c8c"/><path d="M8.500 0.500v3h3" fill="none" stroke="#878787"/></svg>
<svg style="left:94px;top:691px" width="13" height="16" viewBox="0 0 13 16"><path d="M0.500 0.500h8l3 3v12h-11z" fill="url(#dg)" stroke="#8c8c8c"/><path d="M8.500 0.500v3h3" fill="none" stroke="#878787"/></svg>
<svg style="left:94px;top:712px" width="13" height="16" viewBox="0 0 13 16"><path d="M0.500 0.500h8l3 3v12h-11z" fill="url(#dg)" stroke="#8c8c8c"/><path d="M8.500 0.500v3h3" fill="none" stroke="#878787"/></svg>
<svg style="left:94px;top:733px" width="13" height="16" viewBox="0 0 13 16"><path d="M0.500 0.500h8l3 3v12h-11z" fill="url(#dg)" stroke="#8c8c8c"/><path d="M8.500 0.500v3h3" fill="none" stroke="#878787"/></svg>
<!-- ============ main scrollbar ============ -->
<div class="a" id="mainsb"></div>
<div class="a" id="mainthumb"></div>
<svg style="left:1353.300px;top:187px" width="9" height="6" viewBox="0 0 9 6"><path d="M0.800 5.200l3.500-3.700l3.500 3.700" fill="none" stroke="#505050" stroke-width="1.700"/></svg>
<svg style="left:1353.300px;top:733px" width="9" height="6" viewBox="0 0 9 6"><path d="M0.800 0.800l3.500 3.700l3.500-3.700" fill="none" stroke="#505050" stroke-width="1.700"/></svg>

<div id="texts">
<span class="t" style="font-size:12px;color:#000;top:4.00px;left:100.80px;transform:scaleX(1.0000);-webkit-text-stroke:0.22px #000;">C:</span>
<span class="t" style="font-size:12px;color:#000;top:4.00px;left:111.45px;transform:skewX(11.00deg);">\</span>
<span class="t" style="font-size:12px;color:#000;top:4.00px;left:117.12px;transform:scaleX(0.8833);-webkit-text-stroke:0.22px #000;">Users</span>
<span class="t" style="font-size:12px;color:#000;top:4.00px;left:144.10px;transform:skewX(11.00deg);">\</span>
<span class="t" style="font-size:12px;color:#000;top:4.00px;left:149.56px;transform:scaleX(1.0417);-webkit-text-stroke:0.22px #000;">Immobilien Krulich</span>
<span class="t" style="font-size:12px;color:#000;top:4.00px;left:250.10px;transform:skewX(11.00deg);">\</span>
<span class="t" style="font-size:12px;color:#000;top:4.00px;left:256.50px;transform:scaleX(0.9532);-webkit-text-stroke:0.22px #000;">AppData</span>
<span class="t" style="font-size:12px;color:#000;top:4.00px;left:301.15px;transform:skewX(11.00deg);">\</span>
<span class="t" style="font-size:12px;color:#000;top:4.00px;left:306.89px;transform:scaleX(1.0087);-webkit-text-stroke:0.22px #000;">Roaming</span>
<span class="t" style="font-size:12px;color:#000;top:4.00px;left:353.95px;transform:skewX(11.00deg);">\</span>
<span class="t" style="font-size:12px;color:#000;top:4.00px;left:360.50px;transform:scaleX(0.9836);-webkit-text-stroke:0.22px #000;">Thunderbird_Sammlung</span>
<span class="t" style="font-size:12px;color:#000;top:4.00px;left:485.90px;transform:skewX(11.00deg);">\</span>
<span class="t" style="font-size:12px;color:#000;top:4.00px;left:492.30px;transform:scaleX(0.9653);-webkit-text-stroke:0.22px #000;">vom 5.8.2023</span>
<span class="t" style="font-size:12px;color:#000;top:4.00px;left:561.35px;transform:skewX(11.00deg);">\</span>
<span class="t" style="font-size:12px;color:#000;top:4.00px;left:566.84px;transform:scaleX(0.9641);-webkit-text-stroke:0.22px #000;">Profiles</span>
<span class="t" style="font-size:12px;color:#000;top:4.00px;left:605.40px;transform:skewX(11.00deg);">\</span>
<span class="t" style="font-size:12px;color:#000;top:4.00px;left:611.36px;transform:scaleX(0.9353);-webkit-text-stroke:0.22px #000;">1125on31</span>
<span class="t" style="font-size:11px;color:#fff;top:27.35px;left:13.73px;transform:scaleX(1.0750);-webkit-text-stroke:0.12px #fff;">Datei</span>
<span class="t" style="font-size:11px;color:#222;top:27.35px;left:69.54px;transform:scaleX(1.0591);-webkit-text-stroke:0.12px #222;">Start</span>
<span class="t" style="font-size:11px;color:#222;top:27.35px;left:122.73px;transform:scaleX(1.0667);-webkit-text-stroke:0.12px #222;">Freigeben</span>
<span class="t" style="font-size:11px;color:#222;top:27.35px;left:204.80px;transform:scaleX(1.0333);-webkit-text-stroke:0.12px #222;">Ansicht</span>
<span class="t" style="font-size:11px;color:#8b8b8b;top:88.35px;left:8.80px;transform:scaleX(1.0512);-webkit-text-stroke:0.12px #8b8b8b;">An Schnellzugriff</span>
<span class="t" style="font-size:11px;color:#8b8b8b;top:101.05px;left:28.80px;transform:scaleX(1.1000);-webkit-text-stroke:0.12px #8b8b8b;">anheften</span>
<span class="t" style="font-size:11px;color:#262626;top:88.35px;left:100.75px;transform:scaleX(1.0512);-webkit-text-stroke:0.12px #262626;">Kopieren</span>
<span class="t" style="font-size:11px;color:#8b8b8b;top:88.35px;left:151.72px;transform:scaleX(1.0762);-webkit-text-stroke:0.12px #8b8b8b;">Einfügen</span>
<span class="t" style="font-size:11px;color:#262626;top:54.35px;left:224.60px;transform:scaleX(1.0290);-webkit-text-stroke:0.12px #262626;">Ausschneiden</span>
<span class="t" style="font-size:11px;color:#262626;top:76.35px;left:224.03px;transform:scaleX(1.0667);-webkit-text-stroke:0.12px #262626;">Pfad kopieren</span>
<span class="t" style="font-size:11px;color:#8b8b8b;top:98.35px;left:224.80px;transform:scaleX(1.0935);-webkit-text-stroke:0.12px #8b8b8b;">Verknüpfung einfügen</span>
<span class="t" style="font-size:11px;color:#4a4a4a;top:121.35px;left:134.80px;transform:scaleX(1.0405);-webkit-text-stroke:0.12px #4a4a4a;">Zwischenablage</span>
<span class="t" style="font-size:11px;color:#262626;top:88.35px;left:360.05px;transform:scaleX(1.0075);-webkit-text-stroke:0.12px #262626;">Verschieben</span>
<span class="t" style="font-size:11px;color:#262626;top:101.05px;left:373.57px;transform:scaleX(1.0318);-webkit-text-stroke:0.12px #262626;">nach</span>
<span class="t" style="font-size:11px;color:#262626;top:88.35px;left:426.02px;transform:scaleX(1.0279);-webkit-text-stroke:0.12px #262626;">Kopieren</span>
<span class="t" style="font-size:11px;color:#262626;top:101.05px;left:432.57px;transform:scaleX(1.0318);-webkit-text-stroke:0.12px #262626;">nach</span>
<span class="t" style="font-size:11px;color:#262626;top:88.35px;left:484.79px;transform:scaleX(1.0112);-webkit-text-stroke:0.12px #262626;">Löschen</span>
<span class="t" style="font-size:11px;color:#262626;top:88.35px;left:532.25px;transform:scaleX(1.0454);-webkit-text-stroke:0.12px #262626;">Umbenennen</span>
<span class="t" style="font-size:11px;color:#4a4a4a;top:121.35px;left:448.30px;transform:scaleX(1.0476);-webkit-text-stroke:0.12px #4a4a4a;">Organisieren</span>
<span class="t" style="font-size:11px;color:#262626;top:88.35px;left:620.78px;transform:scaleX(1.0241);-webkit-text-stroke:0.12px #262626;">Neuer</span>
<span class="t" style="font-size:11px;color:#262626;top:101.05px;left:618.80px;transform:scaleX(1.0500);-webkit-text-stroke:0.12px #262626;">Ordner</span>
<span class="t" style="font-size:11px;color:#262626;top:54.35px;left:680.30px;transform:scaleX(1.0027);-webkit-text-stroke:0.12px #262626;">Neues Element</span>
<span class="t" style="font-size:11px;color:#262626;top:76.35px;left:680.25px;transform:scaleX(1.0463);-webkit-text-stroke:0.12px #262626;">Einfacher Zugriff</span>
<span class="t" style="font-size:11px;color:#4a4a4a;top:121.35px;left:686.76px;transform:scaleX(1.0368);-webkit-text-stroke:0.12px #4a4a4a;">Neu</span>
<span class="t" style="font-size:11px;color:#262626;top:88.35px;left:791.65px;transform:scaleX(1.0544);-webkit-text-stroke:0.12px #262626;">Eigenschaften</span>
<span class="t" style="font-size:11px;color:#262626;top:54.35px;left:891.30px;transform:scaleX(1.1000);-webkit-text-stroke:0.12px #262626;">Öffnen</span>
<span class="t" style="font-size:11px;color:#8b8b8b;top:76.35px;left:890.28px;transform:scaleX(1.0231);-webkit-text-stroke:0.12px #8b8b8b;">Bearbeiten</span>
<span class="t" style="font-size:11px;color:#8b8b8b;top:98.35px;left:891.30px;transform:scaleX(1.0059);-webkit-text-stroke:0.12px #8b8b8b;">Verlauf</span>
<span class="t" style="font-size:11px;color:#4a4a4a;top:121.35px;left:852.05px;transform:scaleX(1.0922);-webkit-text-stroke:0.12px #4a4a4a;">Öffnen</span>
<span class="t" style="font-size:11px;color:#262626;top:54.35px;left:982.80px;transform:scaleX(1.0310);-webkit-text-stroke:0.12px #262626;">Alles auswählen</span>
<span class="t" style="font-size:11px;color:#262626;top:76.35px;left:981.75px;transform:scaleX(1.0494);-webkit-text-stroke:0.12px #262626;">Nichts auswählen</span>
<span class="t" style="font-size:11px;color:#262626;top:98.35px;left:982.80px;transform:scaleX(1.0452);-webkit-text-stroke:0.12px #262626;">Auswahl umkehren</span>
<span class="t" style="font-size:11px;color:#4a4a4a;top:121.35px;left:995.05px;transform:scaleX(1.0368);-webkit-text-stroke:0.12px #4a4a4a;">Auswählen</span>
<span class="t" style="font-size:12px;color:#000;top:151.00px;left:145.33px;transform:scaleX(0.9664);-webkit-text-stroke:0.22px #000;">Lokaler Datenträger (C:)</span>
<span class="t" style="font-size:12px;color:#000;top:151.00px;left:293.84px;transform:scaleX(0.9617);-webkit-text-stroke:0.22px #000;">Benutzer</span>
<span class="t" style="font-size:12px;color:#000;top:151.00px;left:362.26px;transform:scaleX(1.0411);-webkit-text-stroke:0.22px #000;">Immobilien Krulich</span>
<span class="t" style="font-size:12px;color:#000;top:151.00px;left:487.30px;transform:scaleX(0.9511);-webkit-text-stroke:0.22px #000;">AppData</span>
<span class="t" style="font-size:12px;color:#000;top:151.00px;left:555.54px;transform:scaleX(1.0098);-webkit-text-stroke:0.22px #000;">Roaming</span>
<span class="t" style="font-size:12px;color:#000;top:151.00px;left:627.80px;transform:scaleX(0.9879);-webkit-text-stroke:0.22px #000;">Thunderbird_Sammlung</span>
<span class="t" style="font-size:12px;color:#000;top:151.00px;left:778.30px;transform:scaleX(0.9438);-webkit-text-stroke:0.22px #000;">vom 5.8.2023</span>
<span class="t" style="font-size:12px;color:#000;top:151.00px;left:869.32px;transform:scaleX(0.9795);-webkit-text-stroke:0.22px #000;">Profiles</span>
<span class="t" style="font-size:12px;color:#000;top:151.00px;left:931.82px;transform:scaleX(0.9775);-webkit-text-stroke:0.22px #000;">1125on31.default</span>
<span class="t" style="font-size:12px;color:#6d6d6d;top:151.00px;left:1192.56px;transform:scaleX(0.9855);-webkit-text-stroke:0.1px #6d6d6d;">1125on31.default durchsuch...</span>
<span class="t" style="font-size:11.5px;color:#4c607a;top:186.18px;left:90.52px;transform:scaleX(1.0828);-webkit-text-stroke:0.1px #4c607a;">Name</span>
<span class="t" style="font-size:11.5px;color:#4c607a;top:186.18px;left:352.70px;transform:scaleX(1.0563);-webkit-text-stroke:0.1px #4c607a;">Änderungsdatum</span>
<span class="t" style="font-size:11.5px;color:#4c607a;top:186.18px;left:496.60px;transform:scaleX(0.9667);-webkit-text-stroke:0.1px #4c607a;">Typ</span>
<span class="t" style="font-size:11.5px;color:#4c607a;top:186.18px;left:615.48px;transform:scaleX(1.0161);-webkit-text-stroke:0.1px #4c607a;">Größe</span>
<span class="t" style="font-size:12px;color:#000;top:209.00px;left:111.50px;transform:scaleX(1.0158);-webkit-text-stroke:0.22px #000;">blocklist-addons.json</span>
<span class="t" style="font-size:12px;color:#6d6d6d;top:209.00px;left:351.70px;transform:scaleX(0.9109);-webkit-text-stroke:0.1px #6d6d6d;">06.11.2018 13:43</span>
<span class="t" style="font-size:12px;color:#6d6d6d;top:209.00px;left:495.60px;transform:scaleX(0.9524);-webkit-text-stroke:0.1px #6d6d6d;">JSON-Datei</span>
<span class="t" style="font-size:12px;color:#6d6d6d;top:209.00px;left:647.01px;transform:scaleX(0.8921);-webkit-text-stroke:0.1px #6d6d6d;">560 KB</span>
<span class="t" style="font-size:12px;color:#000;top:230.00px;left:111.50px;transform:scaleX(1.0402);-webkit-text-stroke:0.22px #000;">blocklist-gfx.json</span>
<span class="t" style="font-size:12px;color:#6d6d6d;top:230.00px;left:351.70px;transform:scaleX(0.9011);-webkit-text-stroke:0.1px #6d6d6d;">06.06.2017 15:38</span>
<span class="t" style="font-size:12px;color:#6d6d6d;top:230.00px;left:495.60px;transform:scaleX(0.9524);-webkit-text-stroke:0.1px #6d6d6d;">JSON-Datei</span>
<span class="t" style="font-size:12px;color:#6d6d6d;top:230.00px;left:653.00px;transform:scaleX(0.9000);-webkit-text-stroke:0.1px #6d6d6d;">28 KB</span>
<span class="t" style="font-size:12px;color:#000;top:251.00px;left:111.50px;transform:scaleX(1.0250);-webkit-text-stroke:0.22px #000;">blocklist-plugins.json</span>
<span class="t" style="font-size:12px;color:#6d6d6d;top:251.00px;left:351.70px;transform:scaleX(0.9011);-webkit-text-stroke:0.1px #6d6d6d;">13.09.2018 07:17</span>
<span class="t" style="font-size:12px;color:#6d6d6d;top:251.00px;left:495.60px;transform:scaleX(0.9524);-webkit-text-stroke:0.1px #6d6d6d;">JSON-Datei</span>
<span class="t" style="font-size:12px;color:#6d6d6d;top:251.00px;left:647.01px;transform:scaleX(0.8921);-webkit-text-stroke:0.1px #6d6d6d;">136 KB</span>
<span class="t" style="font-size:12px;color:#000;top:272.00px;left:111.50px;transform:scaleX(1.0061);-webkit-text-stroke:0.22px #000;">blocklist-plugins_1.json</span>
<span class="t" style="font-size:12px;color:#6d6d6d;top:272.00px;left:351.70px;transform:scaleX(0.9011);-webkit-text-stroke:0.1px #6d6d6d;">13.09.2018 07:17</span>
<span class="t" style="font-size:12px;color:#6d6d6d;top:272.00px;left:495.60px;transform:scaleX(0.9524);-webkit-text-stroke:0.1px #6d6d6d;">JSON-Datei</span>
<span class="t" style="font-size:12px;color:#6d6d6d;top:272.00px;left:647.01px;transform:scaleX(0.8921);-webkit-text-stroke:0.1px #6d6d6d;">136 KB</span>
<span class="t" style="font-size:12px;color:#000;top:293.00px;left:111.50px;transform:scaleX(0.9942);-webkit-text-stroke:0.22px #000;">cert8.db</span>
<span class="t" style="font-size:12px;color:#6d6d6d;top:293.00px;left:351.70px;transform:scaleX(0.9109);-webkit-text-stroke:0.1px #6d6d6d;">12.11.2018 18:29</span>
<span class="t" style="font-size:12px;color:#6d6d6d;top:293.00px;left:495.60px;transform:scaleX(0.9282);-webkit-text-stroke:0.1px #6d6d6d;">Data Base File</span>
<span class="t" style="font-size:12px;color:#6d6d6d;top:293.00px;left:647.01px;transform:scaleX(0.8921);-webkit-text-stroke:0.1px #6d6d6d;">384 KB</span>
<span class="t" style="font-size:12px;color:#000;top:314.00px;left:111.50px;transform:scaleX(0.9942);-webkit-text-stroke:0.22px #000;">cert9.db</span>
<span class="t" style="font-size:12px;color:#6d6d6d;top:314.00px;left:351.70px;transform:scaleX(0.9011);-webkit-text-stroke:0.1px #6d6d6d;">20.07.2023 08:29</span>
<span class="t" style="font-size:12px;color:#6d6d6d;top:314.00px;left:495.60px;transform:scaleX(0.9282);-webkit-text-stroke:0.1px #6d6d6d;">Data Base File</span>
<span class="t" style="font-size:12px;color:#6d6d6d;top:314.00px;left:647.01px;transform:scaleX(0.8921);-webkit-text-stroke:0.1px #6d6d6d;">608 KB</span>
<span class="t" style="font-size:12px;color:#000;top:335.00px;left:111.50px;transform:scaleX(1.0750);-webkit-text-stroke:0.22px #000;">compatibility.ini</span>
<span class="t" style="font-size:12px;color:#6d6d6d;top:335.00px;left:351.70px;transform:scaleX(0.9011);-webkit-text-stroke:0.1px #6d6d6d;">21.07.2023 09:22</span>
<span class="t" style="font-size:12px;color:#6d6d6d;top:335.00px;left:495.60px;transform:scaleX(1.0118);-webkit-text-stroke:0.1px #6d6d6d;">Konfigurationsein...</span>
<span class="t" style="font-size:12px;color:#6d6d6d;top:335.00px;left:659.09px;transform:scaleX(0.9083);-webkit-text-stroke:0.1px #6d6d6d;">1 KB</span>
<span class="t" style="font-size:12px;color:#000;top:356.00px;left:111.50px;transform:scaleX(1.0198);-webkit-text-stroke:0.22px #000;">content-prefs.sqlite</span>
<span class="t" style="font-size:12px;color:#6d6d6d;top:356.00px;left:351.70px;transform:scaleX(0.9011);-webkit-text-stroke:0.1px #6d6d6d;">24.07.2023 13:10</span>
<span class="t" style="font-size:12px;color:#6d6d6d;top:356.00px;left:495.60px;transform:scaleX(0.9176);-webkit-text-stroke:0.1px #6d6d6d;">SQLITE-Datei</span>
<span class="t" style="font-size:12px;color:#6d6d6d;top:356.00px;left:647.01px;transform:scaleX(0.8921);-webkit-text-stroke:0.1px #6d6d6d;">224 KB</span>
<span class="t" style="font-size:12px;color:#000;top:377.00px;left:111.50px;transform:scaleX(0.9896);-webkit-text-stroke:0.22px #000;">cookies.sqlite</span>
<span class="t" style="font-size:12px;color:#6d6d6d;top:377.00px;left:351.70px;transform:scaleX(0.9011);-webkit-text-stroke:0.1px #6d6d6d;">05.08.2023 12:39</span>
<span class="t" style="font-size:12px;color:#6d6d6d;top:377.00px;left:495.60px;transform:scaleX(0.9176);-webkit-text-stroke:0.1px #6d6d6d;">SQLITE-Datei</span>
<span class="t" style="font-size:12px;color:#6d6d6d;top:377.00px;left:637.70px;transform:scaleX(0.9000);-webkit-text-stroke:0.1px #6d6d6d;">1.024 KB</span>
<span class="t" style="font-size:12px;color:#000;top:398.00px;left:111.50px;transform:scaleX(0.9676);-webkit-text-stroke:0.22px #000;">cookies_1.sqlite</span>
<span class="t" style="font-size:12px;color:#6d6d6d;top:398.00px;left:351.70px;transform:scaleX(0.9011);-webkit-text-stroke:0.1px #6d6d6d;">05.08.2023 12:39</span>
<span class="t" style="font-size:12px;color:#6d6d6d;top:398.00px;left:495.60px;transform:scaleX(0.9176);-webkit-text-stroke:0.1px #6d6d6d;">SQLITE-Datei</span>
<span class="t" style="font-size:12px;color:#6d6d6d;top:398.00px;left:637.70px;transform:scaleX(0.9000);-webkit-text-stroke:0.1px #6d6d6d;">1.024 KB</span>
<span class="t" style="font-size:12px;color:#000;top:419.00px;left:111.50px;transform:scaleX(0.9763);-webkit-text-stroke:0.22px #000;">directoryTree.json</span>
<span class="t" style="font-size:12px;color:#6d6d6d;top:419.00px;left:351.70px;transform:scaleX(0.9011);-webkit-text-stroke:0.1px #6d6d6d;">20.03.2016 16:50</span>
<span class="t" style="font-size:12px;color:#6d6d6d;top:419.00px;left:495.60px;transform:scaleX(0.9524);-webkit-text-stroke:0.1px #6d6d6d;">JSON-Datei</span>
<span class="t" style="font-size:12px;color:#6d6d6d;top:419.00px;left:659.09px;transform:scaleX(0.9083);-webkit-text-stroke:0.1px #6d6d6d;">1 KB</span>
<span class="t" style="font-size:12px;color:#000;top:440.00px;left:111.50px;transform:scaleX(1.0054);-webkit-text-stroke:0.22px #000;">encrypted-openpgp-passphrase.txt</span>
<span class="t" style="font-size:12px;color:#6d6d6d;top:440.00px;left:351.70px;transform:scaleX(0.9011);-webkit-text-stroke:0.1px #6d6d6d;">17.09.2020 09:19</span>
<span class="t" style="font-size:12px;color:#6d6d6d;top:440.00px;left:495.60px;transform:scaleX(0.9250);-webkit-text-stroke:0.1px #6d6d6d;">Textdokument</span>
<span class="t" style="font-size:12px;color:#6d6d6d;top:440.00px;left:659.09px;transform:scaleX(0.9083);-webkit-text-stroke:0.1px #6d6d6d;">1 KB</span>
<span class="t" style="font-size:12px;color:#000;top:461.00px;left:111.50px;transform:scaleX(1.0164);-webkit-text-stroke:0.22px #000;">enigmail.sqlite</span>
<span class="t" style="font-size:12px;color:#6d6d6d;top:461.00px;left:351.70px;transform:scaleX(0.9011);-webkit-text-stroke:0.1px #6d6d6d;">17.09.2020 09:19</span>
<span class="t" style="font-size:12px;color:#6d6d6d;top:461.00px;left:495.60px;transform:scaleX(0.9176);-webkit-text-stroke:0.1px #6d6d6d;">SQLITE-Datei</span>
<span class="t" style="font-size:12px;color:#6d6d6d;top:461.00px;left:653.00px;transform:scaleX(0.9000);-webkit-text-stroke:0.1px #6d6d6d;">96 KB</span>
<span class="t" style="font-size:12px;color:#000;top:482.00px;left:111.50px;transform:scaleX(0.9844);-webkit-text-stroke:0.22px #000;">extension-preferences.json</span>
<span class="t" style="font-size:12px;color:#6d6d6d;top:482.00px;left:351.70px;transform:scaleX(0.9011);-webkit-text-stroke:0.1px #6d6d6d;">31.10.2021 17:32</span>
<span class="t" style="font-size:12px;color:#6d6d6d;top:482.00px;left:495.60px;transform:scaleX(0.9524);-webkit-text-stroke:0.1px #6d6d6d;">JSON-Datei</span>
<span class="t" style="font-size:12px;color:#6d6d6d;top:482.00px;left:659.09px;transform:scaleX(0.9083);-webkit-text-stroke:0.1px #6d6d6d;">1 KB</span>
<span class="t" style="font-size:12px;color:#000;top:503.00px;left:111.50px;transform:scaleX(0.9848);-webkit-text-stroke:0.22px #000;">extensions.json</span>
<span class="t" style="font-size:12px;color:#6d6d6d;top:503.00px;left:351.70px;transform:scaleX(0.9109);-webkit-text-stroke:0.1px #6d6d6d;">04.08.2023 11:29</span>
<span class="t" style="font-size:12px;color:#6d6d6d;top:503.00px;left:495.60px;transform:scaleX(0.9524);-webkit-text-stroke:0.1px #6d6d6d;">JSON-Datei</span>
<span class="t" style="font-size:12px;color:#6d6d6d;top:503.00px;left:653.00px;transform:scaleX(0.9000);-webkit-text-stroke:0.1px #6d6d6d;">30 KB</span>
<span class="t" style="font-size:12px;color:#000;top:524.00px;left:111.50px;transform:scaleX(0.9557);-webkit-text-stroke:0.22px #000;">extensions_1.json</span>
<span class="t" style="font-size:12px;color:#6d6d6d;top:524.00px;left:351.70px;transform:scaleX(0.9109);-webkit-text-stroke:0.1px #6d6d6d;">04.08.2023 11:29</span>
<span class="t" style="font-size:12px;color:#6d6d6d;top:524.00px;left:495.60px;transform:scaleX(0.9524);-webkit-text-stroke:0.1px #6d6d6d;">JSON-Datei</span>
<span class="t" style="font-size:12px;color:#6d6d6d;top:524.00px;left:653.00px;transform:scaleX(0.9000);-webkit-text-stroke:0.1px #6d6d6d;">30 KB</span>
<span class="t" style="font-size:12px;color:#000;top:545.00px;left:111.50px;transform:scaleX(1.0033);-webkit-text-stroke:0.22px #000;">favicons.sqlite</span>
<span class="t" style="font-size:12px;color:#6d6d6d;top:545.00px;left:351.70px;transform:scaleX(0.9011);-webkit-text-stroke:0.1px #6d6d6d;">31.10.2021 18:23</span>
<span class="t" style="font-size:12px;color:#6d6d6d;top:545.00px;left:495.60px;transform:scaleX(0.9176);-webkit-text-stroke:0.1px #6d6d6d;">SQLITE-Datei</span>
<span class="t" style="font-size:12px;color:#6d6d6d;top:545.00px;left:637.70px;transform:scaleX(0.9000);-webkit-text-stroke:0.1px #6d6d6d;">5.120 KB</span>
<span class="t" style="font-size:12px;color:#000;top:566.00px;left:111.50px;transform:scaleX(0.9861);-webkit-text-stroke:0.22px #000;">folderCache.json</span>
<span class="t" style="font-size:12px;color:#6d6d6d;top:566.00px;left:351.70px;transform:scaleX(0.9011);-webkit-text-stroke:0.1px #6d6d6d;">05.08.2023 12:39</span>
<span class="t" style="font-size:12px;color:#6d6d6d;top:566.00px;left:495.60px;transform:scaleX(0.9524);-webkit-text-stroke:0.1px #6d6d6d;">JSON-Datei</span>
<span class="t" style="font-size:12px;color:#6d6d6d;top:566.00px;left:647.01px;transform:scaleX(0.8921);-webkit-text-stroke:0.1px #6d6d6d;">100 KB</span>
<span class="t" style="font-size:12px;color:#000;top:587.00px;left:111.50px;transform:scaleX(0.9715);-webkit-text-stroke:0.22px #000;">folderTree.json</span>
<span class="t" style="font-size:12px;color:#6d6d6d;top:587.00px;left:351.70px;transform:scaleX(0.9011);-webkit-text-stroke:0.1px #6d6d6d;">05.08.2023 12:39</span>
<span class="t" style="font-size:12px;color:#6d6d6d;top:587.00px;left:495.60px;transform:scaleX(0.9524);-webkit-text-stroke:0.1px #6d6d6d;">JSON-Datei</span>
<span class="t" style="font-size:12px;color:#6d6d6d;top:587.00px;left:659.09px;transform:scaleX(0.9083);-webkit-text-stroke:0.1px #6d6d6d;">6 KB</span>
<span class="t" style="font-size:12px;color:#000;top:608.00px;left:111.50px;transform:scaleX(0.9747);-webkit-text-stroke:0.22px #000;">foldertree_1.json</span>
<span class="t" style="font-size:12px;color:#6d6d6d;top:608.00px;left:351.70px;transform:scaleX(0.9011);-webkit-text-stroke:0.1px #6d6d6d;">05.08.2023 12:39</span>
<span class="t" style="font-size:12px;color:#6d6d6d;top:608.00px;left:495.60px;transform:scaleX(0.9524);-webkit-text-stroke:0.1px #6d6d6d;">JSON-Datei</span>
<span class="t" style="font-size:12px;color:#6d6d6d;top:608.00px;left:659.09px;transform:scaleX(0.9083);-webkit-text-stroke:0.1px #6d6d6d;">6 KB</span>
<span class="t" style="font-size:12px;color:#000;top:629.00px;left:111.50px;transform:scaleX(1.0361);-webkit-text-stroke:0.22px #000;">formhistory.sqlite</span>
<span class="t" style="font-size:12px;color:#6d6d6d;top:629.00px;left:351.70px;transform:scaleX(0.9011);-webkit-text-stroke:0.1px #6d6d6d;">31.10.2021 18:53</span>
<span class="t" style="font-size:12px;color:#6d6d6d;top:629.00px;left:495.60px;transform:scaleX(0.9176);-webkit-text-stroke:0.1px #6d6d6d;">SQLITE-Datei</span>
<span class="t" style="font-size:12px;color:#6d6d6d;top:629.00px;left:647.01px;transform:scaleX(0.8921);-webkit-text-stroke:0.1px #6d6d6d;">256 KB</span>
<span class="t" style="font-size:12px;color:#000;top:650.00px;left:111.50px;transform:scaleX(1.0024);-webkit-text-stroke:0.22px #000;">formhistory_1.sqlite</span>
<span class="t" style="font-size:12px;color:#6d6d6d;top:650.00px;left:351.70px;transform:scaleX(0.9011);-webkit-text-stroke:0.1px #6d6d6d;">31.10.2021 18:53</span>
<span class="t" style="font-size:12px;color:#6d6d6d;top:650.00px;left:495.60px;transform:scaleX(0.9176);-webkit-text-stroke:0.1px #6d6d6d;">SQLITE-Datei</span>
<span class="t" style="font-size:12px;color:#6d6d6d;top:650.00px;left:647.01px;transform:scaleX(0.8921);-webkit-text-stroke:0.1px #6d6d6d;">256 KB</span>
<span class="t" style="font-size:12px;color:#000;top:671.00px;left:111.50px;transform:scaleX(1.0018);-webkit-text-stroke:0.22px #000;">global-messages-db.sqlite</span>
<span class="t" style="font-size:12px;color:#6d6d6d;top:671.00px;left:351.70px;transform:scaleX(0.9011);-webkit-text-stroke:0.1px #6d6d6d;">05.08.2023 12:39</span>
<span class="t" style="font-size:12px;color:#6d6d6d;top:671.00px;left:495.60px;transform:scaleX(0.9176);-webkit-text-stroke:0.1px #6d6d6d;">SQLITE-Datei</span>
<span class="t" style="font-size:12px;color:#6d6d6d;top:671.00px;left:625.90px;transform:scaleX(0.9016);-webkit-text-stroke:0.1px #6d6d6d;">330.752 KB</span>
<span class="t" style="font-size:12px;color:#000;top:692.00px;left:111.50px;transform:scaleX(0.9885);-webkit-text-stroke:0.22px #000;">global-messages-db_1.sqlite</span>
<span class="t" style="font-size:12px;color:#6d6d6d;top:692.00px;left:351.70px;transform:scaleX(0.9011);-webkit-text-stroke:0.1px #6d6d6d;">05.08.2023 12:39</span>
<span class="t" style="font-size:12px;color:#6d6d6d;top:692.00px;left:495.60px;transform:scaleX(0.9176);-webkit-text-stroke:0.1px #6d6d6d;">SQLITE-Datei</span>
<span class="t" style="font-size:12px;color:#6d6d6d;top:692.00px;left:625.90px;transform:scaleX(0.9016);-webkit-text-stroke:0.1px #6d6d6d;">330.752 KB</span>
<span class="t" style="font-size:12px;color:#000;top:713.00px;left:111.50px;transform:scaleX(0.9824);-webkit-text-stroke:0.22px #000;">handlers.json</span>
<span class="t" style="font-size:12px;color:#6d6d6d;top:713.00px;left:351.70px;transform:scaleX(0.9011);-webkit-text-stroke:0.1px #6d6d6d;">18.03.2023 09:30</span>
<span class="t" style="font-size:12px;color:#6d6d6d;top:713.00px;left:495.60px;transform:scaleX(0.9524);-webkit-text-stroke:0.1px #6d6d6d;">JSON-Datei</span>
<span class="t" style="font-size:12px;color:#6d6d6d;top:713.00px;left:659.09px;transform:scaleX(0.9083);-webkit-text-stroke:0.1px #6d6d6d;">3 KB</span>
<span class="t" style="font-size:12px;color:#000;top:734.00px;left:111.50px;transform:scaleX(0.9643);-webkit-text-stroke:0.22px #000;">handlers_1.json</span>
<span class="t" style="font-size:12px;color:#6d6d6d;top:734.00px;left:351.70px;transform:scaleX(0.9011);-webkit-text-stroke:0.1px #6d6d6d;">18.03.2023 09:30</span>
<span class="t" style="font-size:12px;color:#6d6d6d;top:734.00px;left:495.60px;transform:scaleX(0.9524);-webkit-text-stroke:0.1px #6d6d6d;">JSON-Datei</span>
<span class="t" style="font-size:12px;color:#6d6d6d;top:734.00px;left:659.09px;transform:scaleX(0.9083);-webkit-text-stroke:0.1px #6d6d6d;">3 KB</span>
</div>
<!-- ============ status bar ============ -->
<div class="a" id="status"></div>
<div class="a" style="left:94px;top:750px;width:1px;height:12px;background:#f3f3f3"></div>
<div class="a" style="left:1318px;top:744px;width:22px;height:22px;background:#c7e6fb;border:1px solid #43a2dd;border-bottom:none;box-sizing:border-box"></div>
<svg style="left:1322px;top:749px" width="16" height="13" viewBox="0 0 16 13">
 <rect x="0.500" y="0.500" width="4" height="3.500" fill="#fff" stroke="#8a8a8a"/><rect x="0.500" y="4.500" width="4" height="3.500" fill="#fff" stroke="#8a8a8a"/><rect x="0.500" y="8.500" width="4" height="3.700" fill="#fff" stroke="#8a8a8a"/>
 <rect x="1.900" y="1.700" width="1.300" height="1.300" fill="#444"/><rect x="1.900" y="5.700" width="1.300" height="1.300" fill="#444"/><rect x="1.900" y="9.800" width="1.300" height="1.300" fill="#444"/>
 <path d="M6.300 2.400h3.700M12.300 2.400h3.500M6.300 6.500h3.700M12.300 6.500h3.500M6.300 10.500h3.700M12.300 10.500h3.500" stroke="#5f7184" stroke-width="1.100"/>
</svg>
<svg style="left:1344px;top:749px" width="14" height="11" viewBox="0 0 14 11">
 <defs><linearGradient id="pv" x1="0" y1="0" x2="0" y2="1"><stop offset="0" stop-color="#b9d4ea"/><stop offset="1" stop-color="#3f6f98"/></linearGradient></defs>
 <rect x="0.500" y="0.500" width="13" height="10" fill="#fff" stroke="#8a8a8a"/><rect x="2" y="2" width="10" height="7" fill="url(#pv)"/>
</svg>
<div class="a" id="bottom"></div>
<div class="a" id="bottombox"></div>
<div class="a" style="left:1360px;top:766px;width:1px;height:2px;background:#bdbdbd"></div>

<div id="texts2">
<span class="t" style="font-size:11.5px;color:#25283d;top:748.18px;left:14.32px;transform:scaleX(0.9843);-webkit-text-stroke:0.1px #25283d;">129 Elemente</span>
<span class="t" style="font-size:11.5px;color:#25283d;top:748.18px;left:105.20px;transform:scaleX(0.9963);-webkit-text-stroke:0.1px #25283d;">1 Element ausgewählt (559 KB)</span>
</div>
</body></html>
